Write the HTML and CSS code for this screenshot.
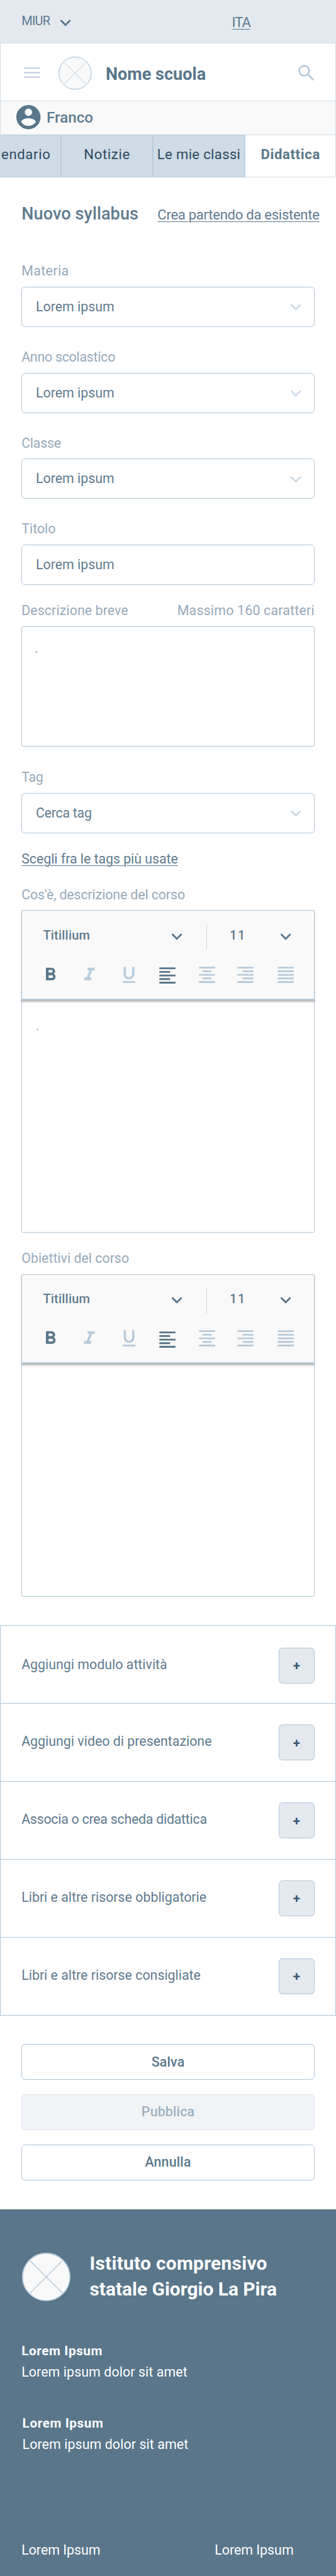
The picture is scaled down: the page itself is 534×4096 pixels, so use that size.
FILE: index.html
```html
<!DOCTYPE html>
<html lang="it">
<head>
<meta charset="utf-8">
<title>Nuovo syllabus</title>
<link rel="stylesheet" href="styles.css">
</head>
<body>
<svg width="0" height="0" class="sprite">
  <symbol id="chevron" viewBox="0 0 24 24"><path d="M7.41 8.59L12 13.17l4.59-4.58L18 10l-6 6-6-6z"/></symbol>
  <symbol id="search" viewBox="0 0 24 24"><path d="M15.5 14h-.79l-.28-.27C15.41 12.59 16 11.11 16 9.5 16 5.91 13.09 3 9.5 3S3 5.91 3 9.5 5.91 16 9.5 16c1.61 0 3.09-.59 4.23-1.57l.27.28v.79l5 4.99L20.49 19l-4.99-5zm-6 0C7.01 14 5 11.99 5 9.5S7.01 5 9.5 5 14 7.01 14 9.5 11.99 14 9.5 14z"/></symbol>
  <symbol id="logo" viewBox="0 0 74 74"><circle cx="37" cy="37" r="36.2" fill="#f9f9f9"/><path d="M11.6 11.6l51 51M62.4 11.6l-51 51" /><circle cx="37" cy="37" r="36.2" fill="none"/></symbol>
  <symbol id="bold" viewBox="0 0 24 24"><path d="M15.6 10.79c.97-.67 1.65-1.77 1.65-2.79 0-2.26-1.75-4-4-4H7v14h7.04c2.09 0 3.71-1.7 3.71-3.79 0-1.52-.86-2.82-2.15-3.42zM10 6.5h3c.83 0 1.5.67 1.5 1.5s-.67 1.5-1.5 1.5h-3v-3zm3.5 9H10v-3h3.5c.83 0 1.5.67 1.5 1.5s-.67 1.5-1.5 1.5z"/></symbol>
  <symbol id="italic" viewBox="0 0 24 24"><path d="M10 4v3h2.21l-3.42 8H6v3h8v-3h-2.21l3.42-8H18V4z"/></symbol>
  <symbol id="underline" viewBox="0 0 24 24"><path d="M12 17c3.31 0 6-2.69 6-6V3h-2.5v8c0 1.93-1.57 3.5-3.5 3.5S8.5 12.93 8.5 11V3H6v8c0 3.31 2.69 6 6 6zm-7 2v2h14v-2H5z"/></symbol>
  <symbol id="left" viewBox="0 0 24 24"><path d="M15 15H3v2h12v-2zm0-8H3v2h12V7zM3 13h18v-2H3v2zm0 8h18v-2H3v2zM3 3v2h18V3H3z"/></symbol>
  <symbol id="center" viewBox="0 0 24 24"><path d="M7 15v2h10v-2H7zm-4 6h18v-2H3v2zm0-8h18v-2H3v2zm4-6v2h10V7H7zM3 3v2h18V3H3z"/></symbol>
  <symbol id="right" viewBox="0 0 24 24"><path d="M3 21h18v-2H3v2zm6-4h12v-2H9v2zm-6-4h18v-2H3v2zm6-4h12V7H9v2zM3 3v2h18V3H3z"/></symbol>
  <symbol id="justify" viewBox="0 0 24 24"><path d="M3 21h18v-2H3v2zm0-4h18v-2H3v2zm0-4h18v-2H3v2zm0-4h18V7H3v2zm0-6v2h18V3H3z"/></symbol>
</svg>

<div class="topbar">
  <span class="miur">MIUR</span>
  <svg class="icon topbar-chevron"><use href="#chevron"/></svg>
  <a class="lang">ITA</a>
</div>

<header class="header">
  <svg class="menu" viewBox="0 0 36 24"><path d="M0 0h36v4H0zM0 10h36v4H0zM0 20h36v4H0z"/></svg>
  <svg class="logo"><use href="#logo"/></svg>
  <h1 class="school">Nome scuola</h1>
  <svg class="icon search"><use href="#search"/></svg>
</header>

<div class="user">
  <svg class="avatar" viewBox="2 2 20 20"><circle cx="12" cy="12" r="9" fill="#fff"/><path d="M12 2C6.48 2 2 6.48 2 12s4.48 10 10 10 10-4.48 10-10S17.52 2 12 2zm0 3c1.66 0 3 1.34 3 3s-1.34 3-3 3-3-1.34-3-3 1.34-3 3-3zm0 14.2c-2.5 0-4.71-1.28-6-3.22.03-1.99 4-3.08 6-3.08 1.99 0 5.97 1.09 6 3.08-1.29 1.94-3.5 3.22-6 3.22z"/></svg>
  <span class="user-name">Franco</span>
</div>

<nav class="tabs">
  <a class="tab">Calendario</a>
  <a class="tab">Notizie</a>
  <a class="tab tab-classes">Le mie classi</a>
  <a class="tab tab-active">Didattica</a>
</nav>

<main class="form">
  <div class="title-row">
    <h2 class="title">Nuovo syllabus</h2>
    <a class="link title-link">Crea partendo da esistente</a>
  </div>

  <div class="field">
    <div class="label wide">Materia</div>
    <div class="input">Lorem ipsum<svg class="icon"><use href="#chevron"/></svg></div>
  </div>
  <div class="field">
    <div class="label tight">Anno scolastico</div>
    <div class="input">Lorem ipsum<svg class="icon"><use href="#chevron"/></svg></div>
  </div>
  <div class="field">
    <div class="label tight">Classe</div>
    <div class="input">Lorem ipsum<svg class="icon"><use href="#chevron"/></svg></div>
  </div>
  <div class="field field-title">
    <div class="label">Titolo</div>
    <div class="input">Lorem ipsum</div>
  </div>
  <div class="field">
    <div class="label label-split"><span>Descrizione breve</span><span class="hint">Massimo 160 caratteri</span></div>
    <div class="textarea">.</div>
  </div>
  <div class="field field-tag">
    <div class="label tight">Tag</div>
    <div class="input tight">Cerca tag<svg class="icon"><use href="#chevron"/></svg></div>
  </div>
  <a class="link tags-link">Scegli fra le tags più usate</a>

  <div class="label label-about">Cos'è, descrizione del corso</div>
  <div class="editor">
    <div class="toolbar">
      <div class="fonts">
        <span class="font-name">Titillium</span>
        <svg class="icon"><use href="#chevron"/></svg>
        <i class="divider"></i>
        <span class="font-size">11</span>
        <svg class="icon"><use href="#chevron"/></svg>
      </div>
      <div class="formats">
        <svg class="icon on"><use href="#bold"/></svg>
        <svg class="icon"><use href="#italic"/></svg>
        <svg class="icon"><use href="#underline"/></svg>
        <svg class="icon on align-left"><use href="#left"/></svg>
        <svg class="icon"><use href="#center"/></svg>
        <svg class="icon"><use href="#right"/></svg>
        <svg class="icon"><use href="#justify"/></svg>
      </div>
    </div>
    <div class="editor-text">.</div>
  </div>

  <div class="label label-goals">Obiettivi del corso</div>
  <div class="editor">
    <div class="toolbar">
      <div class="fonts">
        <span class="font-name">Titillium</span>
        <svg class="icon"><use href="#chevron"/></svg>
        <i class="divider"></i>
        <span class="font-size">11</span>
        <svg class="icon"><use href="#chevron"/></svg>
      </div>
      <div class="formats">
        <svg class="icon on"><use href="#bold"/></svg>
        <svg class="icon"><use href="#italic"/></svg>
        <svg class="icon"><use href="#underline"/></svg>
        <svg class="icon on align-left"><use href="#left"/></svg>
        <svg class="icon"><use href="#center"/></svg>
        <svg class="icon"><use href="#right"/></svg>
        <svg class="icon"><use href="#justify"/></svg>
      </div>
    </div>
  </div>
</main>

<section class="extras">
  <div class="extra"><span>Aggiungi modulo attività</span><button class="add">+</button></div>
  <div class="extra"><span>Aggiungi video di presentazione</span><button class="add">+</button></div>
  <div class="extra tight"><span>Associa o crea scheda didattica</span><button class="add">+</button></div>
  <div class="extra"><span>Libri e altre risorse obbligatorie</span><button class="add">+</button></div>
  <div class="extra"><span>Libri e altre risorse consigliate</span><button class="add">+</button></div>
</section>

<div class="actions">
  <button class="btn">Salva</button>
  <button class="btn btn-off">Pubblica</button>
  <button class="btn">Annulla</button>
</div>

<footer class="footer">
  <div class="footer-head">
    <svg class="logo footer-logo"><use href="#logo"/></svg>
    <div class="footer-title"><span class="footer-name">Istituto comprensivo</span><br>statale Giorgio La Pira</div>
  </div>
  <div class="block"><b>Lorem Ipsum</b><span>Lorem ipsum dolor sit amet</span></div>
  <div class="block block-second"><b>Lorem Ipsum</b><span>Lorem ipsum dolor sit amet</span></div>
  <div class="footer-links"><span>Lorem Ipsum</span><span>Lorem Ipsum</span></div>
</footer>
</body>
</html>
```
FILE: styles.css
```css
/* 1rem = 10 design pixels on a 750-wide artboard */
html { font-size: 7.1235px; }
* { box-sizing: border-box; }
body {
  margin: 0;
  background: #fff;
  color: #5f7a8e;
  font: 400 3rem/4rem Roboto, "Liberation Sans", sans-serif;
  overflow-x: hidden;
}
h1, h2 { margin: 0; font-size: inherit; }
svg { display: block; flex: none; }
.sprite { position: absolute; }
.icon { width: 4.8rem; height: 4.8rem; fill: #5a768a; }

.topbar {
  display: flex;
  align-items: flex-start;
  height: 9.6rem;
  padding-left: 4.8rem;
  background: #e4e9f0;
}
.miur { width: 7.45rem; margin-top: 2.75rem; font-size: 2.8rem; letter-spacing: -.035em; }
.topbar-chevron { margin-top: 2.6rem; }
.lang {
  margin: 3.1rem 0 0 34.7rem;
  font-size: 3.1rem;
  letter-spacing: -.046em;
  text-decoration: underline;
  text-decoration-thickness: 1px;
  text-underline-offset: .4rem;
}

.header {
  display: flex;
  align-items: flex-start;
  height: 13rem;
  padding-left: 5.25rem;
  border: .2rem solid #cfdbe5;
}
.menu { width: 3.6rem; height: 2.4rem; margin-top: 5.3rem; fill: #cfdbe5; }
.logo { width: 7.4rem; height: 7.4rem; stroke: #b9cbda; stroke-width: 1.4; fill: none; }
.header .logo { margin: 2.95rem 0 0 4.1rem; }
.school { margin: 4.9rem 0 0 3.1rem; color: #5a768a; font-size: 3.8rem; font-weight: 700; }
.search { margin: 4.1rem 4.05rem 0 auto; fill: #b9cbda; }

.user {
  display: flex;
  align-items: flex-start;
  height: 7.4rem;
  padding-left: 3.55rem;
  background: #f9f9f9;
  border: solid #cfdbe5;
  border-width: 0 .2rem;
}
.avatar { width: 5.4rem; height: 5.4rem; margin-top: .9rem; fill: #5a768a; }
.user-name { margin: 1.65rem 0 0 1.3rem; font-size: 3.4rem; font-weight: 500; }

.tabs { display: flex; height: 9.6rem; overflow: hidden; }
.tab {
  flex: none;
  display: flex;
  align-items: center;
  justify-content: center;
  width: 20.45rem;
  padding-bottom: .5rem;
  background: #cfdbe5;
  border: .2rem solid #b9cbda;
  color: #2f4a5e;
  font-size: 3.1rem;
  letter-spacing: .03em;
  white-space: nowrap;
}
.tab:first-child { margin-left: -6.8rem; }
.tab-classes { letter-spacing: .0153em; width: 20.55rem; }
.tab-active {
  flex: 1;
  background: #fff;
  border-color: #cfdbe5;
  color: #5a768a;
  font-weight: 700;
}

.form { padding: 6.1rem 4.8rem 0; }
.title-row { display: flex; align-items: baseline; justify-content: space-between; height: 4rem; margin: 0 -1.1rem 8.87rem 0; }
.title { font-size: 3.8rem; font-weight: 500; letter-spacing: .004em; }
.link {
  text-decoration: underline;
  text-decoration-thickness: 1px;
  text-underline-offset: .4rem;
}
.title-link { font-size: 3.1rem; letter-spacing: -.013em; }

.field { margin-bottom: 4.77rem; }
.field-title { margin-bottom: 3.77rem; }
.field-tag { margin-bottom: 3.77rem; }
.label { margin-bottom: 1.43rem; color: #97aaba; }
.label-split { display: flex; justify-content: space-between; letter-spacing: .004em; }
.hint { letter-spacing: .009em; }
.tight { letter-spacing: -.012em; }
.wide { letter-spacing: .018em; }
.input {
  display: flex;
  align-items: center;
  justify-content: space-between;
  height: 9rem;
  padding: .1rem 1.65rem 0 3.06rem;
  border: .2rem solid #b0c4d5;
  border-radius: .8rem;
}
.input .icon { fill: #cfdbe5; }
.textarea {
  height: 26.9rem;
  margin-bottom: 4.87rem;
  padding: 2.8rem;
  border: .2rem solid #b0c4d5;
  border-radius: .4rem;
  color: #97aaba;
}
.tags-link { display: block; margin-bottom: 4rem; letter-spacing: -.002em; }
.label-about { letter-spacing: -.0056em; }

.editor {
  height: 72rem;
  margin-bottom: 3.77rem;
  border: .2rem solid #b0c4d5;
  border-radius: .4rem;
}
.toolbar {
  height: 20rem;
  margin: -1px -1px 0;
  background: #f9f9f9;
  border: .2rem solid #b0c4d5;
  border-bottom: 2px solid #b9cbda;
  border-radius: .4rem .4rem 0 0;
  box-shadow: 0 .3rem .4rem rgba(0, 0, 0, .28);
}
.fonts {
  display: grid;
  grid-template-columns: 27.4rem 9.1rem 5.15rem 10.15rem 4.8rem;
  align-items: center;
  height: 5.6rem;
  margin: 3.1rem 0 3.2rem;
  padding-left: 4.66rem;
  font-size: 2.8rem;
  font-weight: 500;
}
.font-name { padding-bottom: .6rem; letter-spacing: .0116em; }
.font-size { padding-bottom: .6rem; letter-spacing: .083em; }
.fonts .icon { margin-top: -.4rem; }
.divider { height: 5.6rem; width: 1px; background: #d4d4d4; }
.formats {
  display: grid;
  grid-template-columns: 8.8rem 8.8rem 8.6rem 8.8rem 8.6rem 9rem 4.8rem;
  padding-left: 3.86rem;
}
.formats .icon { fill: #b9cbda; }
.formats .on { fill: #5a768a; }
.align-left { margin-top: .2rem; }
.editor-text { padding: 3.77rem 3.06rem; color: #97aaba; }
.editor:last-child { margin-bottom: 6.4rem; }

.extras { border: solid #b0c4d5; border-width: 0 .2rem .2rem; }
.extra {
  display: flex;
  justify-content: space-between;
  align-items: flex-start;
  height: 17.4rem;
  padding: 4.66rem 4.66rem 0;
  border-top: .2rem solid #b0c4d5;
}
.extra:first-child { padding-top: 4.86rem; }
.extra span { margin-top: 1.8rem; }
.add {
  width: 8rem;
  height: 8rem;
  padding: .3rem 0 0;
  background: #e4e9f0;
  border: .2rem solid #b0c4d5;
  border-radius: .8rem;
  color: #3a5a72;
  font: 700 2.9rem/4rem Roboto, sans-serif;
}

.actions { display: grid; gap: 3.2rem; padding: 6.4rem 4.8rem; }
.btn {
  height: 8rem;
  padding: 0;
  background: #fff;
  border: .2rem solid #b0c4d5;
  border-radius: .8rem;
  color: #5a768a;
  font: 500 3rem/4rem Roboto, sans-serif;
  letter-spacing: .007em;
}
.btn-off { background: #f1f4f7; border-color: #dee6ed; color: #9eb0be; }

.footer { height: 82rem; padding: 9.16rem 4.8rem 0; background: #5a768a; color: #fff; }
.footer-head { display: flex; align-items: flex-start; }
.footer-logo { width: 10.8rem; height: 10.8rem; margin: .54rem 4.3rem 0 .1rem; }
.footer-title { font-size: 4.2rem; font-weight: 700; line-height: 5.8rem; }
.footer-name { letter-spacing: .009em; }
.block { display: grid; margin-top: 8.44rem; line-height: 4.8rem; letter-spacing: .004em; }
.block b { font-size: 2.9rem; font-weight: 700; letter-spacing: .03em; }
.block-second { margin: 6.6rem 0 0 .2rem; }
.footer-links { display: grid; grid-template-columns: 43.1rem auto; margin-top: 18.77rem; line-height: 4.8rem; }
```
